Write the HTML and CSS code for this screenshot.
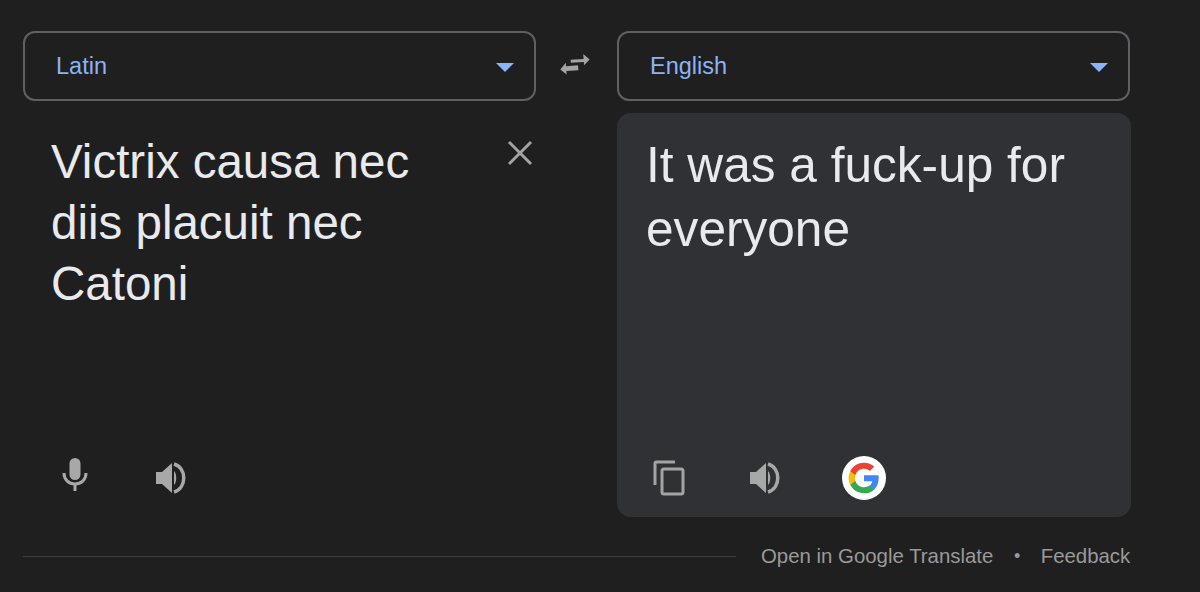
FILE: index.html
```html
<!DOCTYPE html>
<html lang="en">
<head>
    <meta charset="UTF-8">
    <title>Translate</title>
    <link rel="stylesheet" href="styles.css">
</head>
<body>
    <div class="container">
        <div class="lang-row">
            <div class="lang-select">
                <span>Latin</span>
                <span class="caret"></span>
            </div>
            <div class="swap">
                <svg width="32" height="26" viewBox="0 0 32 26">
                    <path d="M12 7.500H25V2.500L31 8.500L25 14V10.500H12Z M19 13.500H7V10L1 16.500L7 22V18.500H19Z" fill="#a3a3a3" transform="rotate(-4 16 13)"/>
                </svg>
            </div>
            <div class="lang-select">
                <span>English</span>
                <span class="caret"></span>
            </div>
        </div>
        <div class="panels">
            <div class="panel source">
                <div class="source-top">
                    <div class="text source-text">Victrix causa nec diis placuit nec Catoni</div>
                    <svg class="clear" width="26" height="26" viewBox="0 0 26 26">
                        <path d="M2 2L24 24M24 2L2 24" stroke="#a3a3a3" stroke-width="3" fill="none"/>
                    </svg>
                </div>
                <div class="tools">
                    <svg class="mic" width="28" height="34" viewBox="0 0 28 34">
                        <rect x="8.500" y="0" width="11" height="22" rx="5.500" fill="#a8a8a8"/>
                        <path d="M3 15C3 22 8 26 14 26S25 22 25 15" stroke="#a8a8a8" stroke-width="3" fill="none"/>
                        <rect x="12.500" y="25" width="3" height="8" fill="#a8a8a8"/>
                    </svg>
                    <svg class="speaker" width="33" height="32" viewBox="0 0 33 32">
                        <path d="M0 10H6L16 1V31L6 22H0Z" fill="#a8a8a8"/>
                        <path d="M18 9C21 12 21 20 18 23Z" fill="#a8a8a8"/>
                        <path d="M18 2C31 6 31 26 18 30" stroke="#a8a8a8" stroke-width="3.500" fill="none"/>
                    </svg>
                </div>
            </div>
            <div class="panel result">
                <div class="text result-text">It was a fuck-up for everyone</div>
                <div class="tools">
                    <svg width="32" height="36" viewBox="0 0 32 36">
                        <path d="M2 25V3.500Q2 2 3.500 2H22" stroke="#a3a3a3" stroke-width="3" fill="none"/>
                        <rect x="9" y="9" width="21" height="25" rx="2" stroke="#a3a3a3" stroke-width="3" fill="none"/>
                    </svg>
                    <svg class="speaker" width="33" height="32" viewBox="0 0 33 32">
                        <path d="M0 10H6L16 1V31L6 22H0Z" fill="#a8a8a8"/>
                        <path d="M18 9C21 12 21 20 18 23Z" fill="#a8a8a8"/>
                        <path d="M18 2C31 6 31 26 18 30" stroke="#a8a8a8" stroke-width="3.500" fill="none"/>
                    </svg>
                    <div class="g-badge">
                        <svg width="32" height="32" viewBox="0 0 48 48">
                            <path fill="#4285F4" d="M46 24.500c0-1.600-.1-3.100-.4-4.500H24v8.700h12.400c-.5 2.900-2.100 5.300-4.600 7v5.800h7.400C43.500 37.500 46 31.600 46 24.500z"/>
                            <path fill="#34A853" d="M24 47c6.200 0 11.400-2 15.200-5.500l-7.400-5.800c-2 1.400-4.700 2.200-7.800 2.200-6 0-11.100-4-12.900-9.500H3.400v5.900C7.200 41.900 15 47 24 47z"/>
                            <path fill="#FBBC05" d="M11.100 28.400c-.5-1.400-.7-2.900-.7-4.400s.3-3 .7-4.400v-5.900H3.400C1.900 16.800 1 20.300 1 24s.9 7.200 2.400 10.300z"/>
                            <path fill="#EA4335" d="M24 10.100c3.400 0 6.400 1.200 8.800 3.400l6.600-6.600C35.400 3.200 30.200 1 24 1 15 1 7.200 6.100 3.400 13.700l7.700 5.900C12.900 14.100 18 10.100 24 10.100z"/>
                        </svg>
                    </div>
                </div>
            </div>
        </div>
        <div class="footer">
            <div class="rule"></div>
            <span>Open in Google Translate</span>
            <span class="dot">•</span>
            <span>Feedback</span>
        </div>
    </div>
</body>
</html>
```

FILE: styles.css
```css
body {
    margin: 0;
    background-color: #1f1f1f;
    font-family: 'Liberation Sans', Arial, sans-serif;
    overflow: hidden;
}
.container {
    width: 1108px;
    padding: 31px 69px 0 23px;
}
.lang-row {
    display: grid;
    grid-template-columns: 513px 81px 513px;
}
.lang-select {
    height: 70px;
    box-sizing: border-box;
    border: 2px solid #5f6064;
    border-radius: 12px;
    padding: 0 20px 0 31px;
    display: flex;
    align-items: center;
    justify-content: space-between;
    color: #8ab4f8;
    font-size: 23.500px;
}
.caret {
    width: 0;
    height: 0;
    border-left: 9px solid transparent;
    border-right: 9px solid transparent;
    border-top: 9px solid #8ab4f8;
    margin-top: 3px;
}
.swap {
    display: flex;
    justify-content: center;
    align-items: center;
    padding: 0 4px 2px 0;
}
.panels {
    display: grid;
    grid-template-columns: 513px 514px;
    column-gap: 81px;
    margin-top: 12px;
}
.panel {
    height: 404px;
    display: flex;
    flex-direction: column;
    justify-content: space-between;
    box-sizing: border-box;
}
.source {
    padding: 18px 0 17px 28px;
}
.source-top {
    display: flex;
    justify-content: space-between;
    align-items: flex-start;
}
.clear {
    margin: 9px 3px 0 0;
}
.result {
    background-color: #303134;
    border-radius: 14px;
    padding: 20px 0 17px 29px;
}
.text {
    color: #e8eaed;
}
.source-text {
    width: 420px;
    font-size: 47.500px;
    line-height: 61px;
}
.result-text {
    width: 450px;
    font-size: 49.600px;
    line-height: 64px;
}
.tools {
    display: flex;
    align-items: center;
    height: 44px;
}
.source .tools {
    padding-left: 10px;
}
.mic {
    margin-top: -6px;
}
.source .speaker {
    margin-left: 67px;
}
.result .tools {
    padding-left: 7px;
}
.result .speaker {
    margin-left: 65px;
}
.g-badge {
    width: 44px;
    height: 44px;
    border-radius: 50%;
    background-color: #fff;
    display: flex;
    align-items: center;
    justify-content: center;
    margin-left: 59px;
}
.footer {
    display: flex;
    align-items: center;
    margin-top: 28px;
    color: #9a9a9a;
    font-size: 20.400px;
    white-space: nowrap;
}
.rule {
    flex: none;
    width: 713px;
    height: 1px;
    background-color: #3c4043;
    margin-right: 25px;
}
.dot {
    margin: 0 20.500px;
    font-size: 18px;
}
```
